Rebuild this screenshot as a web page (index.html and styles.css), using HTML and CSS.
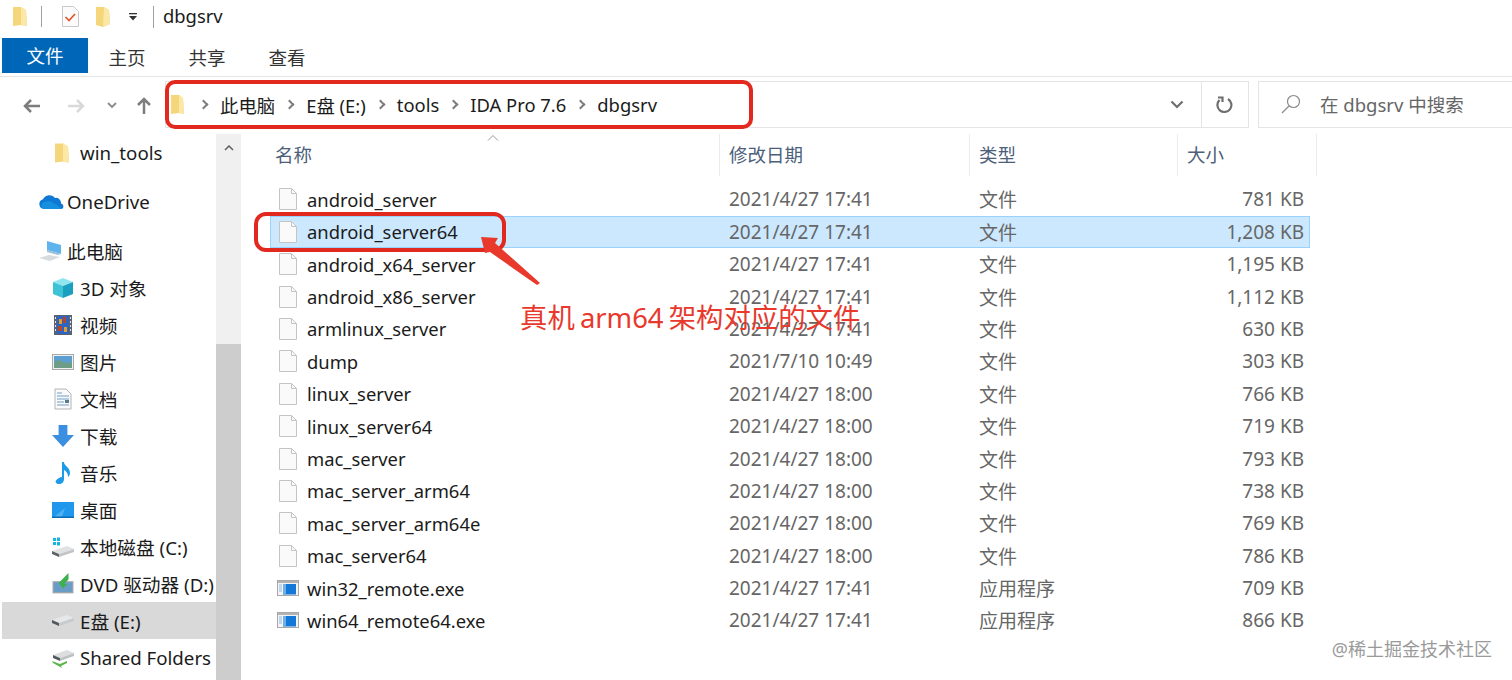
FILE: index.html
```html
<!DOCTYPE html>
<html lang="zh">
<head>
<meta charset="utf-8">
<title>dbgsrv</title>
<link rel="stylesheet" href="styles.css">
</head>
<body>
<div class="window">
  <header class="titlebar">
    <svg class="qa-folder" viewBox="0 0 14 21"><path d="M0 1h8l5 3 1 16-6-1-8 1z" fill="#f6d67a"/><path d="M8 1l5 3 1 16-6-1z" fill="#fbe7a6"/></svg>
    <span class="qa-sep"></span>
    <svg class="qa-check" viewBox="0 0 17 21"><path d="M.5.500h11l5 5v15H.5z" fill="#fbfbfb" stroke="#c9c9c9"/><path d="M3.500 11l3.500 3.500L13 8" fill="none" stroke="#e0562b" stroke-width="1.700"/></svg>
    <svg class="qa-folder second" viewBox="0 0 14 21"><path d="M0 1h8l5 3 1 14-7 3-7-2z" fill="#f6d67a"/><path d="M8 1l5 3 1 14-7 3z" fill="#fbe7a6"/></svg>
    <svg class="qa-drop" viewBox="0 0 10 8"><rect x="1" y="0" width="8" height="1.300" fill="#333"/><path d="M1 3h8L5 7.500z" fill="#333"/></svg>
    <span class="qa-sep tall"></span>
    <span class="title-text">dbgsrv</span>
  </header>

  <nav class="ribbon">
    <span class="tab file">文件</span>
    <span class="tab">主页</span>
    <span class="tab">共享</span>
    <span class="tab">查看</span>
  </nav>

  <div class="navbar">
    <div class="nav-buttons">
      <svg class="nav-ico back" viewBox="0 0 18 14"><path d="M8 1L2 7l6 6M2 7h15" fill="none" stroke="#7d7d7d" stroke-width="2.500"/></svg>
      <svg class="nav-ico fwd" viewBox="0 0 18 14"><path d="M10 1l6 6-6 6M16 7H1" fill="none" stroke="#d9d9d9" stroke-width="2.500"/></svg>
      <svg class="nav-ico down" viewBox="0 0 10 7"><path d="M1 1l4 4 4-4" fill="none" stroke="#8a8a8a" stroke-width="1.800"/></svg>
      <svg class="nav-ico up" viewBox="0 0 14 18"><path d="M1 8l6-6 6 6M7 2v15" fill="none" stroke="#7d7d7d" stroke-width="2.500"/></svg>
    </div>
    <div class="address">
      <svg class="addr-folder" viewBox="0 0 16 22"><path d="M1 1h8l4 3 1 16-5-1-8 1z" fill="#f6d67a"/><path d="M9 1l4 3 1 16-5-1z" fill="#fbe7a6"/></svg>
      <span class="chev"></span><span class="crumb">此电脑</span>
      <span class="chev"></span><span class="crumb">E盘 (E:)</span>
      <span class="chev"></span><span class="crumb">tools</span>
      <span class="chev"></span><span class="crumb">IDA Pro 7.6</span>
      <span class="chev"></span><span class="crumb">dbgsrv</span>
      <span class="addr-fill"></span>
      <span class="addr-drop"><svg viewBox="0 0 14 9"><path d="M1.500 1.500L7 7l5.500-5.500" fill="none" stroke="#6e6e6e" stroke-width="2.200"/></svg></span>
      <span class="addr-refresh"><svg viewBox="0 0 18 18"><path d="M4.500 4A7 7 0 1 0 13 3" fill="none" stroke="#6e6e6e" stroke-width="2.200"/><path d="M3 1.500h4.500V6" fill="none" stroke="#6e6e6e" stroke-width="2.200"/></svg></span>
    </div>
    <div class="search">
      <svg class="search-ico" viewBox="0 0 20 20"><circle cx="12.500" cy="7.500" r="6" fill="none" stroke="#8a8a8a" stroke-width="1.200"/><path d="M8 12l-7 7" stroke="#8a8a8a" stroke-width="1.200"/></svg>
      <span>在 dbgsrv 中搜索</span>
    </div>
  </div>

  <main class="content">
    <aside class="sidebar">
      <ul class="tree">
        <li class="node lvl2 top"><svg class="ico folder" viewBox="0 0 14 21"><path d="M0 1h8l5 3 1 16-6-1-8 1z" fill="#f6d67a"/><path d="M8 1l5 3 1 16-6-1z" fill="#fbe7a6"/></svg><span>win_tools</span></li>
        <li class="node lvl1 gap1"><svg class="ico wide" viewBox="0 0 26 16"><path d="M6 15a5 5 0 0 1-1-9.800A7 7 0 0 1 17 4a5 5 0 0 1 6 5.500 3 3 0 0 1 1 5.500z" fill="#0f78d4"/><path d="M5 15a4 4 0 0 1 1-7l6-1 7 4 5 4z" fill="#1490df"/></svg><span>OneDrive</span></li>
        <li class="node lvl1 gap2"><svg class="ico wide" viewBox="0 0 26 22"><path d="M9 1l14 4v9l-14-4z" fill="#5fb4ee"/><path d="M1 18l10-3 11 2-10 4z" fill="#d8dcdf"/><path d="M9 10l14 4-3 1-11-3z" fill="#9dbdd3"/></svg><span>此电脑</span></li>
        <li class="node lvl2"><svg class="ico" viewBox="0 0 22 22"><path d="M11 1l10 4-10 4L1 5z" fill="#8fe6ee"/><path d="M1 5l10 4v12L1 17z" fill="#3dc2d6"/><path d="M21 5l-10 4v12l10-4z" fill="#1a9fc0"/></svg><span>3D 对象</span></li>
        <li class="node lvl2"><svg class="ico" viewBox="0 0 20 22"><rect x="1" y="1" width="18" height="20" fill="#5a6470"/><rect x="4" y="2" width="12" height="18" fill="#2d63c4"/><path d="M6 5h3v5H6zM11 13h3v5h-3z" fill="#e0a02c"/><path d="M10 3h3v6h-3zM5 12h4v5H5z" fill="#b5452c"/><path d="M2 3h1v2H2zM2 7h1v2H2zM2 11h1v2H2zM2 15h1v2H2zM17 3h1v2h-1zM17 7h1v2h-1zM17 11h1v2h-1zM17 15h1v2h-1z" fill="#e6e6e6"/></svg><span>视频</span></li>
        <li class="node lvl2"><svg class="ico" viewBox="0 0 22 18"><rect x=".5" y="1.500" width="21" height="15" fill="#f1f1f1" stroke="#a9a9a9"/><rect x="2" y="3" width="18" height="7" fill="#5a9ed2"/><path d="M2 9l5-2 6 3 7-1v6H2z" fill="#6e9c86"/></svg><span>图片</span></li>
        <li class="node lvl2"><svg class="ico" viewBox="0 0 18 22"><path d="M1 1h11l5 5v15H1z" fill="#fafafa" stroke="#b4b4b4"/><path d="M3 5h5M3 8h12M3 11h12M3 14h7M3 17h12" stroke="#6c9ec8" stroke-width="1.200"/><rect x="11" y="12" width="4" height="3" fill="#587a8d"/></svg><span>文档</span></li>
        <li class="node lvl2"><svg class="ico" viewBox="0 0 20 20"><path d="M6 0h8v9h6L10 20 0 9h6z" fill="#3b8fe0"/></svg><span>下载</span></li>
        <li class="node lvl2"><svg class="ico" viewBox="0 0 20 22"><path d="M9 0h2c0 4 6 5 6 11 0 2-1 3-2 4 0-4-2-6-4-7v9c0 3-2 5-5 5s-4-2-3-3.500S7 15 9 15z" fill="#1e9be8"/></svg><span>音乐</span></li>
        <li class="node lvl2"><svg class="ico" viewBox="0 0 22 16"><rect width="22" height="16" fill="#1e97ec"/><path d="M2 15L13 6l-3 9z" fill="#4eb0f2"/><rect y="14.500" width="22" height="1.500" fill="#0a6bb5"/></svg><span>桌面</span></li>
        <li class="node lvl2"><svg class="ico" viewBox="0 0 22 20"><path d="M1 1h3v3H1zM5 .5h3V4H5zM1 5h3v3H1zM5 5h3v3.500H5z" fill="#12b6e0"/><path d="M0 14l15-5 7 3-15 5z" fill="#dfe1e2"/><path d="M7 17l15-5v3L7 20z" fill="#c3c6c8"/><path d="M0 14l7 3v3l-7-3z" fill="#5c6266"/></svg><span>本地磁盘 (C:)</span></li>
        <li class="node lvl2"><svg class="ico" viewBox="0 0 20 20"><rect x="1" y="8" width="18" height="10" fill="#6a9cc8" stroke="#a3a3a3"/><path d="M15 0L6 9l4 5 4-4h-3l4-4z" fill="#3fb04f"/></svg><span>DVD 驱动器 (D:)</span></li>
        <li class="node lvl2 current"><svg class="ico" viewBox="0 0 22 14"><path d="M0 6l15-5 7 3-15 5z" fill="#e6e7e8"/><path d="M7 9l15-5v3L7 12z" fill="#c8cacc"/><path d="M0 6l7 3v3L0 9z" fill="#54595d"/></svg><span>E盘 (E:)</span></li>
        <li class="node lvl2"><svg class="ico" viewBox="0 0 22 20"><path d="M1 7l14-5 7 3-14 5z" fill="#dcdedf"/><path d="M8 10l14-5v3L8 13z" fill="#bfc2c4"/><path d="M1 7l7 3v3l-7-3z" fill="#54595d"/><path d="M0 13l8 3 7-3v2l-6 3 1 2-9-5z" fill="#5cb54a"/></svg><span>Shared Folders</span></li>
      </ul>
    </aside>

    <div class="scrollbar">
      <svg class="scroll-up" viewBox="0 0 10 6"><path d="M1 5l4-4 4 4" fill="none" stroke="#606060" stroke-width="1.500"/></svg>
      <div class="scroll-thumb"></div>
    </div>

    <section class="files">
      <div class="sort-caret"><svg viewBox="0 0 12 6"><path d="M1 5.500L6 .5l5 5" fill="none" stroke="#9a9a9a"/></svg></div>
      <div class="grid head">
        <span class="h-name">名称</span><span>修改日期</span><span>类型</span><span>大小</span>
      </div>
      <div class="grid row"><span class="name"><svg class="doc" viewBox="0 0 18 22"><path d="M.5.500h12l5 5v16H.5z" fill="#fafafa" stroke="#c4c4c4"/><path d="M12.500.500v5h5" fill="none" stroke="#c4c4c4"/></svg>android_server</span><span>2021/4/27 17:41</span><span>文件</span><span class="size">781 KB</span></div>
      <div class="grid row selected"><span class="name"><svg class="doc" viewBox="0 0 18 22"><path d="M.5.500h12l5 5v16H.5z" fill="#fafafa" stroke="#c4c4c4"/><path d="M12.500.500v5h5" fill="none" stroke="#c4c4c4"/></svg>android_server64</span><span>2021/4/27 17:41</span><span>文件</span><span class="size">1,208 KB</span></div>
      <div class="grid row"><span class="name"><svg class="doc" viewBox="0 0 18 22"><path d="M.5.500h12l5 5v16H.5z" fill="#fafafa" stroke="#c4c4c4"/><path d="M12.500.500v5h5" fill="none" stroke="#c4c4c4"/></svg>android_x64_server</span><span>2021/4/27 17:41</span><span>文件</span><span class="size">1,195 KB</span></div>
      <div class="grid row"><span class="name"><svg class="doc" viewBox="0 0 18 22"><path d="M.5.500h12l5 5v16H.5z" fill="#fafafa" stroke="#c4c4c4"/><path d="M12.500.500v5h5" fill="none" stroke="#c4c4c4"/></svg>android_x86_server</span><span>2021/4/27 17:41</span><span>文件</span><span class="size">1,112 KB</span></div>
      <div class="grid row"><span class="name"><svg class="doc" viewBox="0 0 18 22"><path d="M.5.500h12l5 5v16H.5z" fill="#fafafa" stroke="#c4c4c4"/><path d="M12.500.500v5h5" fill="none" stroke="#c4c4c4"/></svg>armlinux_server</span><span>2021/4/27 17:41</span><span>文件</span><span class="size">630 KB</span></div>
      <div class="grid row"><span class="name"><svg class="doc" viewBox="0 0 18 22"><path d="M.5.500h12l5 5v16H.5z" fill="#fafafa" stroke="#c4c4c4"/><path d="M12.500.500v5h5" fill="none" stroke="#c4c4c4"/></svg>dump</span><span>2021/7/10 10:49</span><span>文件</span><span class="size">303 KB</span></div>
      <div class="grid row"><span class="name"><svg class="doc" viewBox="0 0 18 22"><path d="M.5.500h12l5 5v16H.5z" fill="#fafafa" stroke="#c4c4c4"/><path d="M12.500.500v5h5" fill="none" stroke="#c4c4c4"/></svg>linux_server</span><span>2021/4/27 18:00</span><span>文件</span><span class="size">766 KB</span></div>
      <div class="grid row"><span class="name"><svg class="doc" viewBox="0 0 18 22"><path d="M.5.500h12l5 5v16H.5z" fill="#fafafa" stroke="#c4c4c4"/><path d="M12.500.500v5h5" fill="none" stroke="#c4c4c4"/></svg>linux_server64</span><span>2021/4/27 18:00</span><span>文件</span><span class="size">719 KB</span></div>
      <div class="grid row"><span class="name"><svg class="doc" viewBox="0 0 18 22"><path d="M.5.500h12l5 5v16H.5z" fill="#fafafa" stroke="#c4c4c4"/><path d="M12.500.500v5h5" fill="none" stroke="#c4c4c4"/></svg>mac_server</span><span>2021/4/27 18:00</span><span>文件</span><span class="size">793 KB</span></div>
      <div class="grid row"><span class="name"><svg class="doc" viewBox="0 0 18 22"><path d="M.5.500h12l5 5v16H.5z" fill="#fafafa" stroke="#c4c4c4"/><path d="M12.500.500v5h5" fill="none" stroke="#c4c4c4"/></svg>mac_server_arm64</span><span>2021/4/27 18:00</span><span>文件</span><span class="size">738 KB</span></div>
      <div class="grid row"><span class="name"><svg class="doc" viewBox="0 0 18 22"><path d="M.5.500h12l5 5v16H.5z" fill="#fafafa" stroke="#c4c4c4"/><path d="M12.500.500v5h5" fill="none" stroke="#c4c4c4"/></svg>mac_server_arm64e</span><span>2021/4/27 18:00</span><span>文件</span><span class="size">769 KB</span></div>
      <div class="grid row"><span class="name"><svg class="doc" viewBox="0 0 18 22"><path d="M.5.500h12l5 5v16H.5z" fill="#fafafa" stroke="#c4c4c4"/><path d="M12.500.500v5h5" fill="none" stroke="#c4c4c4"/></svg>mac_server64</span><span>2021/4/27 18:00</span><span>文件</span><span class="size">786 KB</span></div>
      <div class="grid row"><span class="name"><svg class="exe" viewBox="0 0 22 16"><rect x=".5" y=".5" width="21" height="15" fill="#f4f4f4" stroke="#a8a8a8"/><rect x="1" y="1" width="20" height="2" fill="#b4b4b4"/><rect x="6" y="4" width="13" height="10.500" fill="#1478d8"/><rect x="6" y="4" width="3" height="10.500" fill="#6db0e8"/><path d="M2 5h3M2 7h3M2 9h3M2 11h3" stroke="#8fb7dc"/></svg>win32_remote.exe</span><span>2021/4/27 17:41</span><span>应用程序</span><span class="size">709 KB</span></div>
      <div class="grid row"><span class="name"><svg class="exe" viewBox="0 0 22 16"><rect x=".5" y=".5" width="21" height="15" fill="#f4f4f4" stroke="#a8a8a8"/><rect x="1" y="1" width="20" height="2" fill="#b4b4b4"/><rect x="6" y="4" width="13" height="10.500" fill="#1478d8"/><rect x="6" y="4" width="3" height="10.500" fill="#6db0e8"/><path d="M2 5h3M2 7h3M2 9h3M2 11h3" stroke="#8fb7dc"/></svg>win64_remote64.exe</span><span>2021/4/27 17:41</span><span>应用程序</span><span class="size">866 KB</span></div>
    </section>
  </main>

  <div class="mark mark-address"></div>
  <div class="mark mark-row"></div>
  <svg class="arrow" viewBox="0 0 61 52"><path d="M1 2L18 3l-3 5 45 40-3 2L10 17l-5 1z" fill="#e8392c"/></svg>
  <div class="note">真机 arm64 架构对应的文件</div>
  <div class="watermark">@稀土掘金技术社区</div>
</div>
</body>
</html>
```

FILE: styles.css
```css
* { box-sizing: border-box; }
html, body { margin: 0; padding: 0; background: #fff; }
body {
  font-family: "Noto Sans", "Noto Sans CJK SC", sans-serif;
  font-size: 19px;
  color: #1b1b1b;
  overflow: hidden;
}
.window { position: relative; width: 1512px; height: 680px; overflow: hidden; }

.titlebar { display: flex; align-items: center; height: 38px; padding: 0 0 5px 13px; }
.qa-folder { width: 14px; height: 21px; }
.qa-folder.second { margin-left: 17px; }
.qa-sep { width: 1px; height: 21px; background: #a0a0a0; margin-left: 14px; }
.qa-check { width: 17px; height: 21px; margin-left: 20px; }
.qa-drop { width: 10px; height: 8px; margin-left: 18px; }
.qa-sep.tall { height: 22px; margin-left: 15px; }
.title-text { margin-left: 9px; font-size: 18.400px; line-height: 1; }

.ribbon { display: flex; height: 39px; padding-left: 2px; border-bottom: 1px solid #e6e6e6; }
.tab { width: 80px; text-align: center; line-height: 40px; height: 38px; color: #333; font-size: 18.500px; }
.tab.file { width: 86px; height: 35px; line-height: 36px; background: #0067b8; color: #fff; margin-right: -1px; }

.navbar { display: flex; align-items: center; height: 57px; padding-bottom: 2px; }
.nav-buttons { display: flex; align-items: center; width: 165px; flex: none; padding: 2px 0 0 23px; }
.nav-ico.back { width: 18px; height: 14px; }
.nav-ico.fwd { width: 18px; height: 14px; margin-left: 26px; }
.nav-ico.down { width: 10px; height: 7px; margin-left: 22px; }
.nav-ico.up { width: 14px; height: 18px; margin-left: 20px; }

.address { display: flex; align-items: center; width: 1084px; height: 47px; border: 1px solid #e4e4e4; font-size: 18.400px; padding-left: 4px; }
.addr-folder { width: 16px; height: 22px; margin-right: 14px; flex: none; }
.chev { width: 7px; height: 7px; border-top: 2.500px solid #7d7d7d; border-right: 2.500px solid #7d7d7d; transform: rotate(45deg); margin-right: 13px; flex: none; }
.crumb { margin-right: 11px; white-space: nowrap; }
.addr-fill { flex: 1; }
.addr-drop { display: flex; align-items: center; justify-content: center; width: 48px; height: 100%; }
.addr-drop svg { width: 14px; height: 9px; }
.addr-refresh { display: flex; align-items: center; justify-content: center; width: 47px; height: 100%; padding-right: 2px; border-left: 1px solid #e4e4e4; }
.addr-refresh svg { width: 18px; height: 18px; }

.search { display: flex; align-items: center; flex: 1; height: 47px; margin-left: 9px; border: 1px solid #e4e4e4; border-right: 0; padding: 0 0 2px 22px; color: #666; font-size: 18.500px; }
.search-ico { width: 20px; height: 20px; margin-right: 19px; }

.content { display: flex; height: 546px; }
.sidebar { width: 216px; flex: none; overflow: hidden; font-size: 18.700px; }
.tree { list-style: none; margin: 0; padding: 0; }
.node { display: flex; align-items: center; height: 37px; white-space: nowrap; }
.node .ico { width: 22px; height: 22px; flex: none; }
.node .ico.wide { width: 26px; }
.node.lvl1 { padding-left: 38px; }
.node.lvl2 { padding-left: 52px; }
.node.lvl1 .ico { margin-right: 3px; }
.node.lvl2 .ico { margin-right: 6px; }
.node.lvl2 .ico.folder { width: 14px; margin: 0 11px 0 3px; }
.node.gap1 { margin-top: 12px; }
.node.gap2 { margin-top: 12px; }
.node.current { background: #d9d9d9; margin-left: 2px; padding-left: 50px; }

.scrollbar { position: relative; width: 25px; flex: none; background: #f0f0f0; }
.scroll-up { display: block; width: 10px; height: 6px; margin: 11px auto 0; }
.scroll-thumb { position: absolute; left: 0; right: 0; top: 210px; bottom: 0; background: #cdcdcd; }

.files { position: relative; flex: 1; padding-left: 29px; }
.sort-caret { position: absolute; left: 246px; top: 0; width: 12px; height: 6px; line-height: 0; }
.sort-caret svg { width: 12px; height: 6px; }
.grid { display: grid; grid-template-columns: 449px 250px 208px 133px; width: 1040px; align-items: center; }
.grid.head { height: 42px; margin-bottom: 7.200px; color: #4c607a; font-size: 18.500px; width: 1047px; grid-template-columns: 450px 250px 208px 139px; }
.grid.head span { display: block; height: 100%; line-height: 42px; padding-left: 9px; border-right: 1px solid #ececec; }
.grid.head .h-name { padding-left: 5px; }
.row { height: 32.400px; color: #666; }
.row.selected { background: #cce8ff; box-shadow: inset 0 0 0 1px #99d1ff; }
.row span { white-space: nowrap; padding-left: 10px; }
.row .name { display: flex; align-items: center; color: #1b1b1b; padding-left: 9px; font-size: 18.400px; }
.row .size { text-align: right; padding: 0 6px 0 0; }
.doc { width: 18px; height: 22px; margin-right: 10px; flex: none; }
.exe { width: 22px; height: 16px; margin: 0 8px 0 -2px; flex: none; }

.mark { position: absolute; border: 4px solid #e1291f; border-radius: 10px; pointer-events: none; }
.mark-address { left: 165px; top: 80px; width: 588px; height: 49px; }
.mark-row { left: 254px; top: 212px; width: 252px; height: 40px; border-radius: 12px; }
.arrow { position: absolute; left: 480px; top: 235px; width: 61px; height: 52px; }
.note { position: absolute; left: 520px; top: 300px; color: #e8392c; font-size: 27.400px; line-height: 36px; word-spacing: -2px; white-space: nowrap; }
.watermark { position: absolute; right: 20px; top: 638px; color: #9a9a9a; font-size: 18px; line-height: 22px; }
```
